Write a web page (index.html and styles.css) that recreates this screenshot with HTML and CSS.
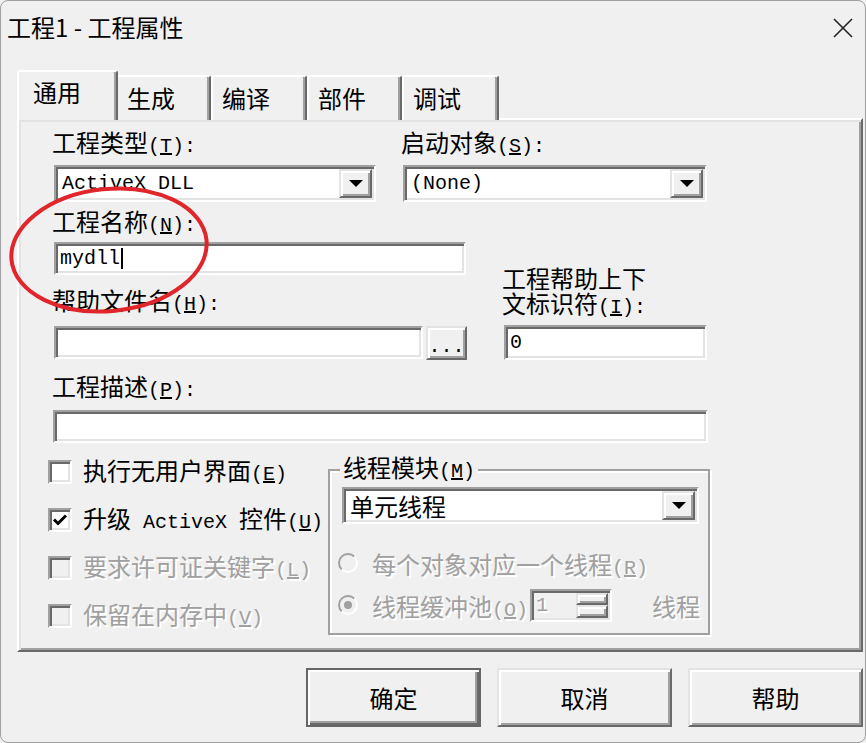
FILE: index.html
```html
<!DOCTYPE html>
<html lang="zh-CN">
<head>
    <meta charset="UTF-8">
    <meta name="viewport" content="width=device-width, initial-scale=1.0">
    <title>工程1 - 工程属性</title>
    <link rel="stylesheet" href="styles.css">
</head>
<body>
<div class="window">
    <div class="titlebar">
        <span class="title">工程1 - 工程属性</span>
        <svg class="close" viewBox="0 0 20 20"><path d="M1 1 L19 19 M19 1 L1 19" /></svg>
    </div>

    <!-- 选项卡 -->
    <div class="tabs">
        <div class="tab active">通用</div>
        <div class="tab t2">生成</div>
        <div class="tab t3">编译</div>
        <div class="tab t4">部件</div>
        <div class="tab t5">调试</div>
    </div>

    <div class="panel">
        <div class="row-top">
            <div class="col-type">
                <div class="label">工程类型<span class="m">(<u>T</u>):</span></div>
                <div class="combo sunken type-combo">
                    <span class="m">ActiveX DLL</span>
                    <span class="drop raised"><i class="arrow"></i></span>
                </div>
            </div>
            <div class="col-start">
                <div class="label">启动对象<span class="m">(<u>S</u>):</span></div>
                <div class="combo sunken start-combo">
                    <span class="m">(None)</span>
                    <span class="drop raised"><i class="arrow"></i></span>
                </div>
            </div>
        </div>

        <div class="row-mid">
            <div class="col-name">
                <div class="label">工程名称<span class="m">(<u>N</u>):</span></div>
                <div class="field sunken name-field"><span class="m">mydll</span><span class="caret"></span></div>
                <div class="label help-label">帮助文件名<span class="m">(<u>H</u>):</span></div>
                <div class="help-row">
                    <div class="field sunken help-field"></div>
                    <div class="dots raised"><span class="m">...</span></div>
                </div>
            </div>
            <div class="col-ctx">
                <div class="label two-line">工程帮助上下<br>文标识符<span class="m">(<u>I</u>):</span></div>
                <div class="field sunken ctx-field"><span class="m">0</span></div>
            </div>
        </div>

        <div class="label desc-label">工程描述<span class="m">(<u>P</u>):</span></div>
        <div class="field sunken desc-field"></div>

        <div class="row-bottom">
            <div class="checks">
                <div class="check">
                    <span class="box sunken"></span>
                    <span>执行无用户界面<span class="m">(<u>E</u>)</span></span>
                </div>
                <div class="check">
                    <span class="box sunken"><svg viewBox="0 0 16 16"><path d="M2 7.5 L6 11.5 L14 3.5" /></svg></span>
                    <span>升级<span class="m"> ActiveX </span>控件<span class="m">(<u>U</u>)</span></span>
                </div>
                <div class="check disabled">
                    <span class="box sunken"></span>
                    <span class="dim">要求许可证关键字<span class="m">(<u>L</u>)</span></span>
                </div>
                <div class="check disabled">
                    <span class="box sunken"></span>
                    <span class="dim">保留在内存中<span class="m">(<u>V</u>)</span></span>
                </div>
            </div>

            <fieldset class="group">
                <legend>线程模块<span class="m">(<u>M</u>)</span></legend>
                <div class="combo sunken thread-combo">
                    <span>单元线程</span>
                    <span class="drop raised"><i class="arrow"></i></span>
                </div>
                <div class="radio-row first">
                    <span class="radio"></span>
                    <span class="dim">每个对象对应一个线程<span class="m">(<u>R</u>)</span></span>
                </div>
                <div class="radio-row">
                    <span class="radio on"></span>
                    <span class="dim">线程缓冲池<span class="m">(<u>O</u>)</span></span>
                    <div class="spin sunken">
                        <span class="m dim">1</span>
                        <span class="spin-btns">
                            <span class="spin-btn raised"></span>
                            <span class="spin-btn raised"></span>
                        </span>
                    </div>
                    <span class="dim threads">线程</span>
                </div>
            </fieldset>
        </div>
    </div>

    <div class="buttons">
        <button class="btn default">确定</button>
        <button class="btn raised">取消</button>
        <button class="btn raised">帮助</button>
    </div>

    <!-- 红色圈注 -->
    <svg class="mark" viewBox="0 0 864 741">
        <ellipse cx="108" cy="249" rx="98" ry="61" transform="rotate(-6 108 249)" />
    </svg>
</div>
</body>
</html>
```

FILE: styles.css
```css
* {
    box-sizing: border-box;
}

body {
    margin: 0;
    background-color: #f0f0f0;
    font-family: "Noto Sans CJK SC", sans-serif;
    font-size: 24px;
    color: #000;
}

.window {
    position: relative;
    width: 866px;
    height: 743px;
    border: 1px solid #a0a0a0;
    border-radius: 8px;
    background-color: #f0f0f0;
    overflow: hidden;
}

.titlebar {
    height: 56px;
    display: flex;
    align-items: center;
    justify-content: space-between;
    padding: 0 12px 4px 6px;
}

.title {
    font-size: 24px;
    line-height: 30px;
}

.close {
    width: 20px;
    height: 20px;
    margin-top: 2px;
}

.close path {
    stroke: #222;
    stroke-width: 1.6;
    fill: none;
}

/* 选项卡 */
.tabs {
    display: flex;
    align-items: flex-end;
    height: 50px;
    margin: 13px 0 0 16px;
}

.tab {
    height: 45px;
    padding: 6px 0 0 9px;
    line-height: 30px;
    border: 2px solid #fff;
    border-right-color: #696969;
    border-bottom: none;
    border-radius: 3px 3px 0 0;
    box-shadow: inset -2px 0 0 #a0a0a0;
    background-color: #f0f0f0;
}

.tab.active {
    position: relative;
    z-index: 1;
    width: 101px;
    height: 50px;
    padding: 5px 0 0 14px;
}

.t2 { width: 95px; margin-left: -2px; }
.t3 { width: 96px; }
.t4 { width: 95px; }
.t5 { width: 97px; }

.panel {
    width: 846px;
    height: 534px;
    margin: -2px 0 0 16px;
    padding: 11px 0 0 33px;
    border: 2px solid;
    border-color: #fff #696969 #696969 #fff;
    box-shadow: inset 2px 2px 0 #e3e3e3, inset -2px -2px 0 #a0a0a0;
}

/* 立体边框 */
.sunken {
    border: 2px solid;
    border-color: #a0a0a0 #fff #fff #a0a0a0;
    box-shadow: inset 2px 2px 0 #696969, inset -2px -2px 0 #e3e3e3;
    background-color: #fff;
}

.raised {
    border: 2px solid;
    border-color: #e3e3e3 #696969 #696969 #e3e3e3;
    box-shadow: inset 2px 2px 0 #fff, inset -2px -2px 0 #a0a0a0;
    background-color: #f0f0f0;
}

.m {
    font-family: "Liberation Mono", monospace;
    font-size: 20px;
}

.label {
    height: 26px;
    line-height: 22px;
    white-space: nowrap;
}

.dim {
    color: #a0a0a0;
    text-shadow: 2px 2px 0 #fff;
}

/* 下拉框 */
.combo {
    display: flex;
    align-items: center;
    height: 37px;
    padding: 2px 2px 2px 6px;
    white-space: nowrap;
}

.drop {
    display: flex;
    align-items: center;
    justify-content: center;
    width: 33px;
    height: 100%;
    margin-left: auto;
}

.arrow {
    width: 0;
    height: 0;
    border-left: 7px solid transparent;
    border-right: 7px solid transparent;
    border-top: 7px solid #000;
}

.field {
    display: flex;
    align-items: center;
    height: 33px;
    padding: 0 4px;
}

.row-top {
    display: flex;
    gap: 25px;
}

.col-type {
    width: 324px;
}

.col-start {
    width: 306px;
}

.type-combo {
    width: 322px;
    margin: 8px 0 0 2px;
}

.start-combo {
    width: 304px;
    margin: 8px 0 0 2px;
}

.row-mid {
    display: flex;
    align-items: flex-end;
    margin-top: 8px;
}

.col-name {
    width: 415px;
}

.name-field {
    width: 412px;
    margin: 6px 0 0 2px;
}

.caret {
    width: 2px;
    height: 21px;
    margin-left: 1px;
    background-color: #000;
}

.help-label {
    margin-top: 14px;
}

.help-row {
    display: flex;
    gap: 3px;
    margin: 11px 0 0 2px;
}

.help-field {
    width: 369px;
}

.dots {
    width: 41px;
    height: 34px;
    text-align: center;
    line-height: 28px;
}

.col-ctx {
    width: 205px;
    margin-left: 35px;
}

.two-line {
    height: 50px;
    line-height: 25px;
}

.ctx-field {
    width: 203px;
    height: 35px;
    margin: 10px 0 0 2px;
}

.desc-label {
    margin-top: 15px;
}

.desc-field {
    width: 655px;
    margin: 9px 0 0 1px;
}

/* 复选框与线程模块 */
.row-bottom {
    display: flex;
    margin: 5px 0 0 -4px;
}

.checks {
    width: 280px;
}

.check {
    display: flex;
    align-items: center;
    gap: 11px;
    height: 48px;
    line-height: 26px;
    white-space: nowrap;
}

.box {
    width: 24px;
    height: 24px;
    padding: 2px;
    flex: none;
}

.box svg {
    display: block;
    width: 16px;
    height: 16px;
}

.box path {
    fill: none;
    stroke: #000;
    stroke-width: 3;
}

.check.disabled .box {
    background-color: #f0f0f0;
}

.group {
    width: 382px;
    height: 180px;
    margin: 7px 0 0 0;
    padding: 0 8px;
    min-width: 0;
    border: 2px solid #a0a0a0;
    box-shadow: inset 2px 2px 0 #fff, 2px 2px 0 #fff;
}

.group legend {
    margin-left: 2px;
    padding: 0 3px;
    line-height: 24px;
    background-color: #f0f0f0;
}

.thread-combo {
    width: 357px;
    margin: 3px 0 0 4px;
}

.radio-row {
    display: flex;
    align-items: center;
    height: 42px;
    white-space: nowrap;
}

.radio-row.first {
    margin-top: 18px;
}

.radio {
    display: flex;
    align-items: center;
    justify-content: center;
    width: 20px;
    height: 20px;
    margin-right: 14px;
    border: 2px solid;
    border-color: #a0a0a0 #fff #fff #a0a0a0;
    border-radius: 50%;
    background-color: #f0f0f0;
    flex: none;
}

.radio.on::after {
    content: "";
    width: 8px;
    height: 8px;
    border-radius: 50%;
    background-color: #a0a0a0;
}

.spin {
    display: flex;
    align-items: center;
    width: 86px;
    height: 33px;
    margin-left: 2px;
    padding: 2px 2px 2px 4px;
    background-color: #f0f0f0;
}

.spin-btns {
    display: flex;
    flex-direction: column;
    width: 32px;
    height: 100%;
    margin-left: auto;
}

.spin-btn {
    flex: 1;
}

.threads {
    margin-left: 40px;
}

/* 底部按钮 */
.buttons {
    display: flex;
    justify-content: flex-end;
    gap: 16px;
    margin-top: 16px;
    padding-right: 2px;
}

.btn {
    width: 175px;
    height: 59px;
    font-family: "Noto Sans CJK SC", sans-serif;
    font-size: 24px;
    color: #000;
    padding: 0;
}

.btn.default {
    border: 2px solid #666;
    background-color: #f0f0f0;
    box-shadow: inset 2px 2px 0 #fff, inset -2px -2px 0 #696969, inset -4px -4px 0 #a0a0a0;
}

/* 红色圈注 */
.mark {
    position: absolute;
    left: 0;
    top: 0;
    width: 864px;
    height: 741px;
    pointer-events: none;
}

.mark ellipse {
    fill: none;
    stroke: #e0262b;
    stroke-width: 4;
}
```
